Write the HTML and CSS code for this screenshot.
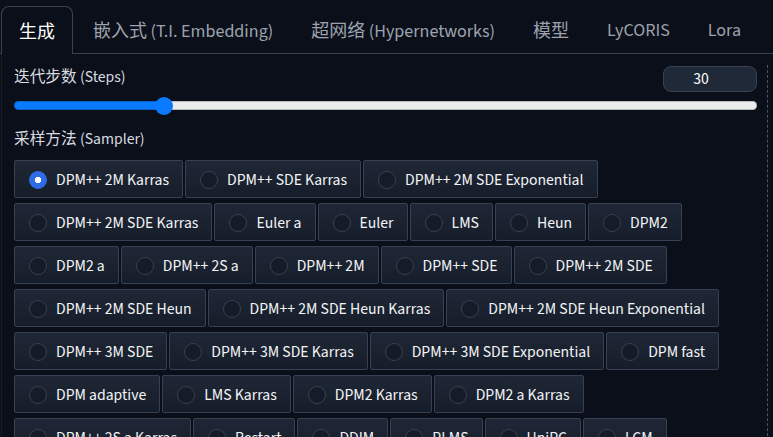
FILE: index.html
```html
<!DOCTYPE html>
<html lang="zh-CN">
<head>
  <meta charset="UTF-8" />
  <meta name="viewport" content="width=device-width, initial-scale=1.0" />
  <title>txt2img</title>
  <link rel="stylesheet" href="styles.css">
</head>
<body>

  <div class="tabs">
    <button class="tab selected">生成</button>
    <button class="tab">嵌入式 (T.I. Embedding)</button>
    <button class="tab">超网络 (Hypernetworks)</button>
    <button class="tab">模型</button>
    <button class="tab">LyCORIS</button>
    <button class="tab">Lora</button>
  </div>

  <div class="panel">
    <div class="settings">
      <div class="field-head">
        <span class="field-label">迭代步数 (Steps)</span>
        <input class="num" type="text" value="30" />
      </div>
      <input class="slider" type="range" min="1" max="150" value="30"
             style="background: linear-gradient(to right, #0a7aff 0 20%, #ececec 20% 100%);" />

      <div class="field-label sampler-label">采样方法 (Sampler)</div>
      <div class="radios">
        <label class="opt"><input type="radio" name="sampler" checked /><span>DPM++ 2M Karras</span></label>
        <label class="opt"><input type="radio" name="sampler" /><span>DPM++ SDE Karras</span></label>
        <label class="opt"><input type="radio" name="sampler" /><span>DPM++ 2M SDE Exponential</span></label>
        <label class="opt"><input type="radio" name="sampler" /><span>DPM++ 2M SDE Karras</span></label>
        <label class="opt"><input type="radio" name="sampler" /><span>Euler a</span></label>
        <label class="opt"><input type="radio" name="sampler" /><span>Euler</span></label>
        <label class="opt"><input type="radio" name="sampler" /><span>LMS</span></label>
        <label class="opt"><input type="radio" name="sampler" /><span>Heun</span></label>
        <label class="opt"><input type="radio" name="sampler" /><span>DPM2</span></label>
        <label class="opt"><input type="radio" name="sampler" /><span>DPM2 a</span></label>
        <label class="opt"><input type="radio" name="sampler" /><span>DPM++ 2S a</span></label>
        <label class="opt"><input type="radio" name="sampler" /><span>DPM++ 2M</span></label>
        <label class="opt"><input type="radio" name="sampler" /><span>DPM++ SDE</span></label>
        <label class="opt"><input type="radio" name="sampler" /><span>DPM++ 2M SDE</span></label>
        <label class="opt"><input type="radio" name="sampler" /><span>DPM++ 2M SDE Heun</span></label>
        <label class="opt"><input type="radio" name="sampler" /><span>DPM++ 2M SDE Heun Karras</span></label>
        <label class="opt"><input type="radio" name="sampler" /><span>DPM++ 2M SDE Heun Exponential</span></label>
        <label class="opt"><input type="radio" name="sampler" /><span>DPM++ 3M SDE</span></label>
        <label class="opt"><input type="radio" name="sampler" /><span>DPM++ 3M SDE Karras</span></label>
        <label class="opt"><input type="radio" name="sampler" /><span>DPM++ 3M SDE Exponential</span></label>
        <label class="opt"><input type="radio" name="sampler" /><span>DPM fast</span></label>
        <label class="opt"><input type="radio" name="sampler" /><span>DPM adaptive</span></label>
        <label class="opt"><input type="radio" name="sampler" /><span>LMS Karras</span></label>
        <label class="opt"><input type="radio" name="sampler" /><span>DPM2 Karras</span></label>
        <label class="opt"><input type="radio" name="sampler" /><span>DPM2 a Karras</span></label>
        <label class="opt"><input type="radio" name="sampler" /><span>DPM++ 2S a Karras</span></label>
        <label class="opt"><input type="radio" name="sampler" /><span>Restart</span></label>
        <label class="opt"><input type="radio" name="sampler" /><span>DDIM</span></label>
        <label class="opt"><input type="radio" name="sampler" /><span>PLMS</span></label>
        <label class="opt"><input type="radio" name="sampler" /><span>UniPC</span></label>
        <label class="opt"><input type="radio" name="sampler" /><span>LCM</span></label>
      </div>
    </div>
    <div class="handle"></div>
  </div>

</body>
</html>
```

FILE: styles.css
```css
* {
  box-sizing: border-box;
}

body {
  margin: 0;
  background: #0b0f19;
  color: #e5e7eb;
  font-family: "Source Sans 3", "Noto Sans CJK SC", sans-serif;
}

.tabs {
  display: flex;
  padding: 6px 0 0 1px;
  border-bottom: 1px solid #374151;
}

.tab {
  height: 47px;
  padding: 0 17px;
  margin-right: 2px;
  border: 1px solid transparent;
  border-bottom: none;
  border-radius: 8px 8px 0 0;
  background: none;
  color: #9ca3af;
  font-family: inherit;
  font-size: 18px;
  white-space: nowrap;
  cursor: pointer;
}

.tab.selected {
  height: 48px;
  margin-bottom: -1px;
  border-color: #374151;
  background: #0b0f19;
  color: #fff;
}

.panel {
  display: flex;
  margin-left: 1px;
  border-left: 1px solid #161c28;
  padding-left: 12px;
  min-height: 400px;
}

.settings {
  width: 743px;
}

.handle {
  margin: 11px 0 0 10px;
  border-left: 1px dashed #4b5563;
}

.field-head {
  display: flex;
  justify-content: space-between;
  align-items: flex-start;
  margin-top: 12px;
}

.field-label {
  padding-top: 1px;
  font-size: 15.7px;
  line-height: 20px;
  color: #d8dbe0;
}

.num {
  width: 94px;
  height: 26px;
  padding: 0 18px 0 0;
  border: 1px solid #374151;
  border-radius: 8px;
  background: #1f2937;
  color: #fff;
  font-family: inherit;
  font-size: 15.7px;
  text-align: center;
}

.slider {
  -webkit-appearance: none;
  appearance: none;
  display: block;
  width: 100%;
  height: 9px;
  margin: 9px 0 0;
  border: none;
  border-radius: 5px;
  box-shadow: inset 0 0 0 1px rgba(0, 0, 0, 0.2);
}

.slider::-webkit-slider-thumb {
  -webkit-appearance: none;
  width: 18px;
  height: 18px;
  border-radius: 50%;
  background: #0a7aff;
}

.sampler-label {
  margin-top: 18px;
}

.radios {
  display: flex;
  flex-wrap: wrap;
  gap: 5px 2px;
  margin-top: 11px;
}

.opt {
  display: flex;
  align-items: center;
  height: 38px;
  padding: 1px 13px 0 14px;
  border: 1px solid #374151;
  border-radius: 2px;
  background: linear-gradient(to bottom, #1f2736, #161d2a);
  color: #f3f4f6;
  font-size: 15.7px;
  white-space: nowrap;
}

.opt input {
  -webkit-appearance: none;
  appearance: none;
  width: 18px;
  height: 18px;
  margin: 0 9px 0 0;
  border: 1px solid #374151;
  border-radius: 50%;
  background: #151b27;
}

.opt input:checked {
  border-color: #2f6de8;
  background: radial-gradient(circle, #fff 0 3px, #2f6de8 3.5px);
}
```
